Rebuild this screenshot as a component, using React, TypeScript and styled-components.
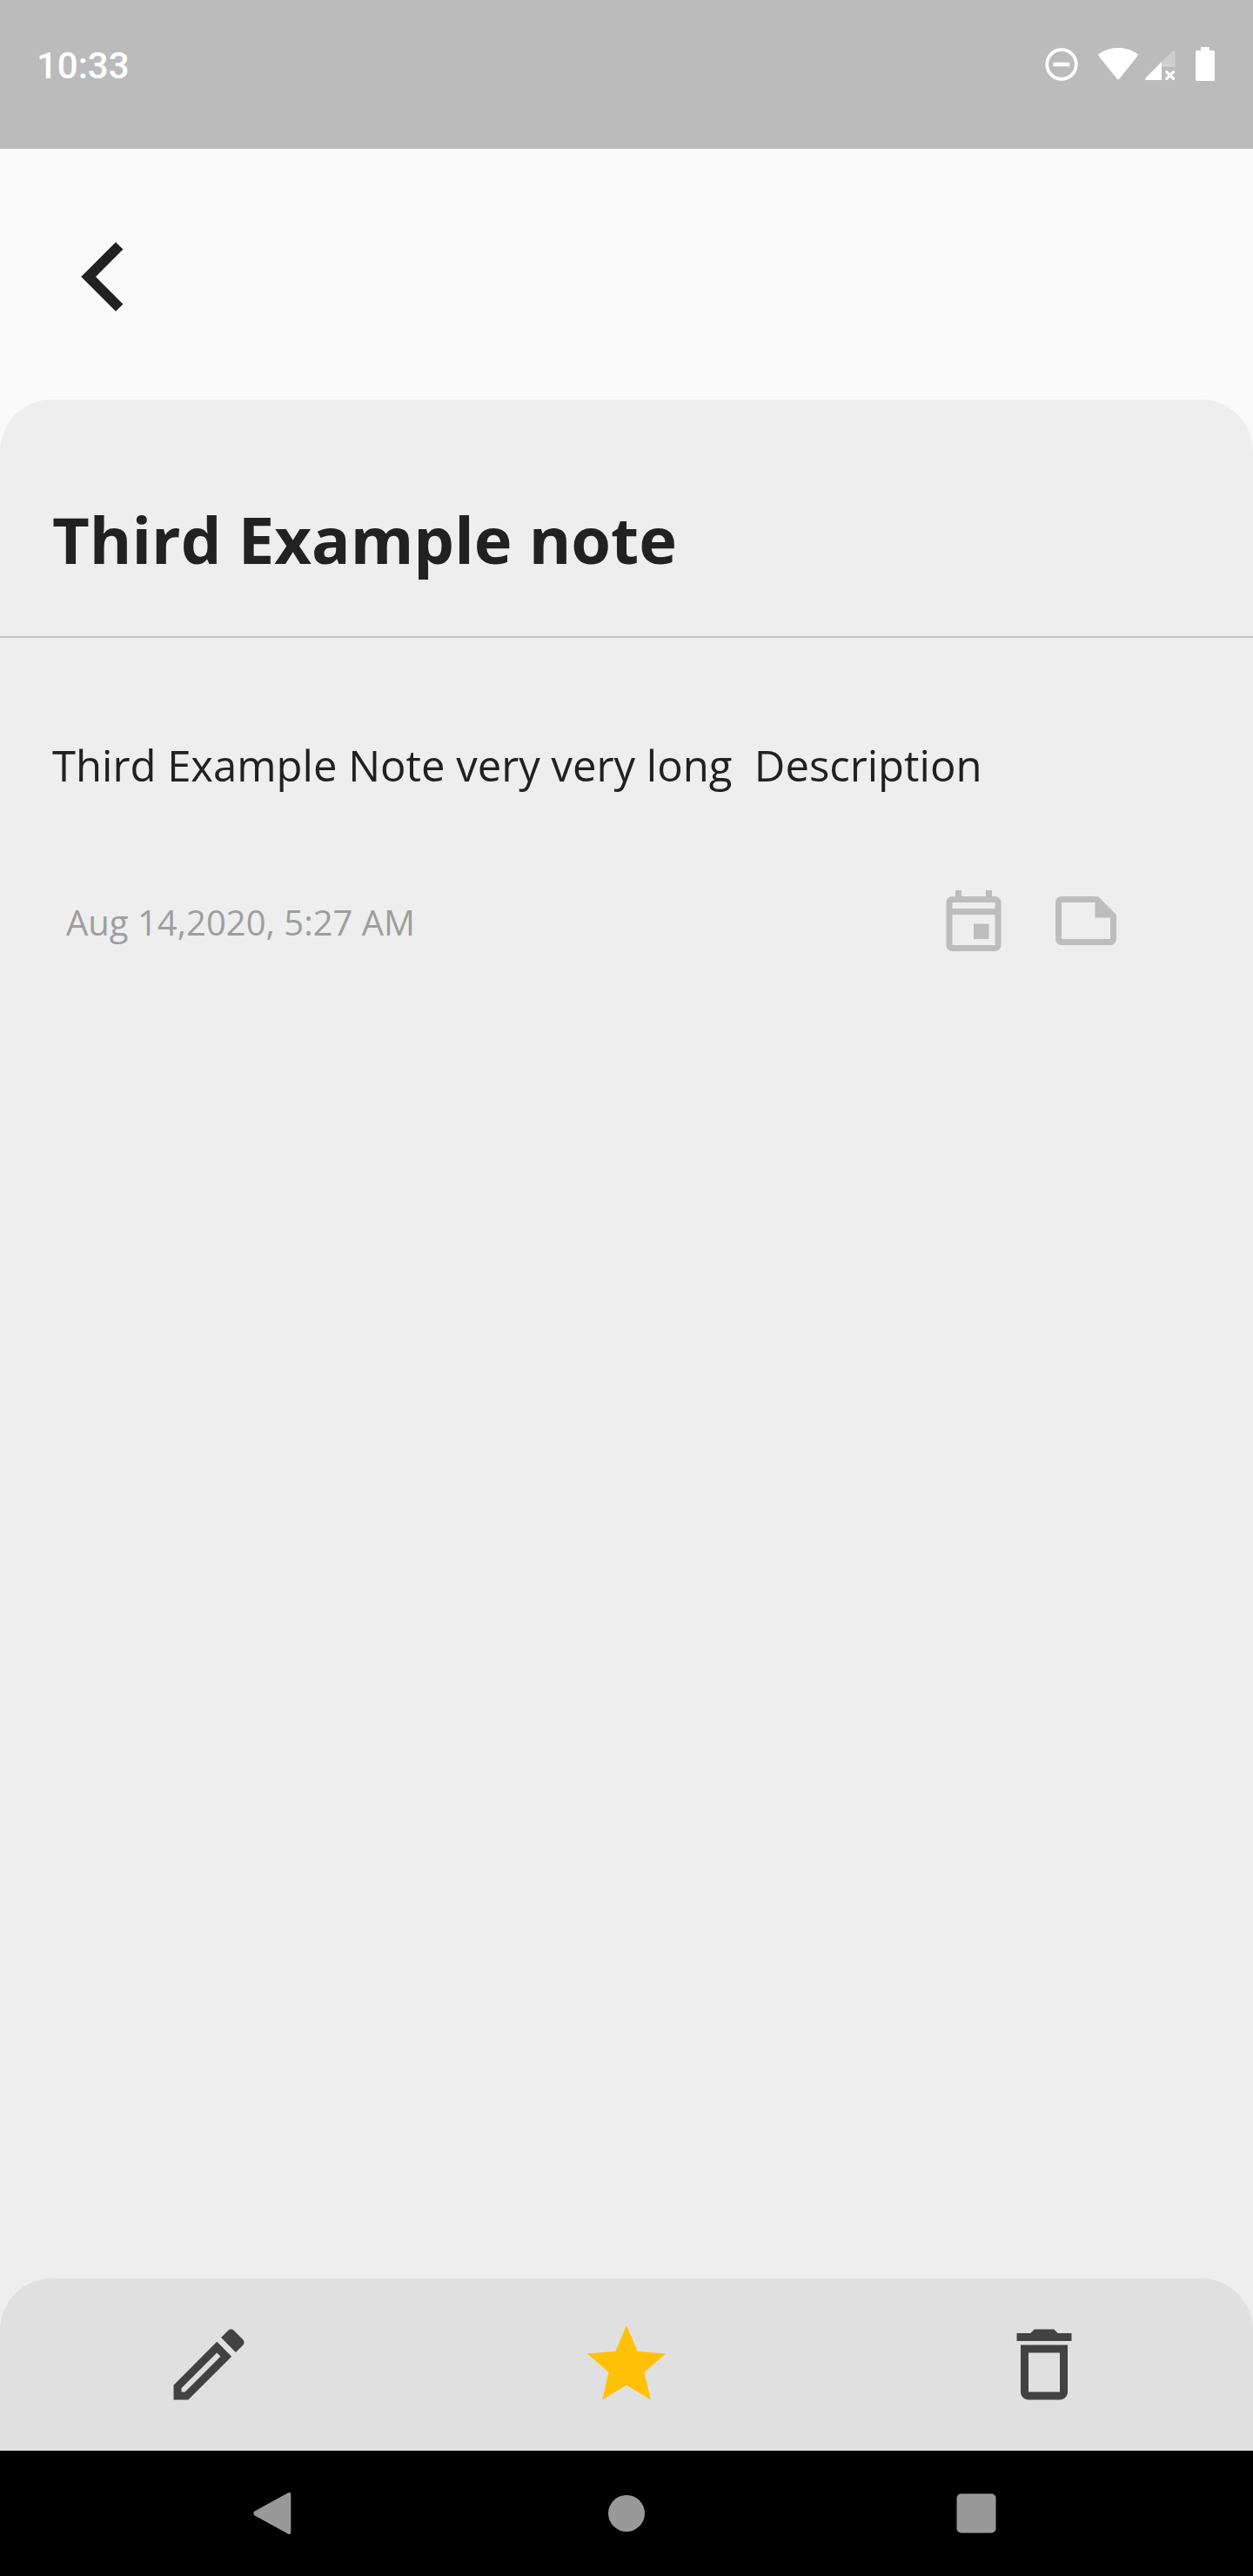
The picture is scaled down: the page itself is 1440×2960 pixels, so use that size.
import React from "react";
import styled, { createGlobalStyle } from "styled-components";

const GlobalStyle = createGlobalStyle`
  *, *::before, *::after { box-sizing: border-box; }
  body {
    margin: 0;
    background: #eeeeee;
    color: #212121;
    font-family: "Open Sans", "Noto Sans", sans-serif;
  }
`;

const Screen = styled.div`
  display: flex;
  flex-direction: column;
  min-height: 100vh;
  background: #fafafa;
`;

const StatusBar = styled.div`
  display: flex;
  justify-content: space-between;
  align-items: flex-start;
  height: 171px;
  padding: 51px 44px 0 42px;
  background: #bbbbbb;
  color: #ffffff;
`;

const Clock = styled.time`
  font: 500 42px/50px Roboto, sans-serif;
`;

const StatusIcons = styled.div`
  display: flex;
  align-items: center;
  padding-top: 3px;
`;

const StatusIcon = styled.svg<{ $gap?: number }>`
  display: block;
  margin-left: ${(p) => p.$gap ?? 0}px;
`;

const AppBar = styled.header`
  display: flex;
  align-items: center;
  height: 288px;
  padding: 0 56px;
`;

const IconButton = styled.button<{ $color: string }>`
  display: flex;
  align-items: center;
  justify-content: center;
  padding: 0;
  border: 0;
  background: none;
  color: ${(p) => p.$color};
  cursor: pointer;
`;

const Glyph = styled.svg<{ $size: number }>`
  display: block;
  width: ${(p) => p.$size}px;
  height: ${(p) => p.$size}px;
  fill: currentColor;
`;

const Note = styled.main`
  flex: 1;
  border-radius: 60px 60px 0 0;
  background: #eeeeee;
`;

const TitleBlock = styled.div`
  padding: 109px 60px 59px;
  border-bottom: 2px solid #c6c6c6;
`;

const Title = styled.h1`
  margin: 0;
  font-size: 74px;
  line-height: 104px;
  font-weight: 700;
`;

const Body = styled.div`
  padding: 110px 60px;
`;

const Description = styled.p`
  margin: 0;
  font-size: 49px;
  line-height: 72px;
  white-space: pre-wrap;
`;

const Meta = styled.div`
  display: flex;
  align-items: center;
  justify-content: space-between;
  margin-top: 101px;
  padding: 0 90px 0 16px;
`;

const Stamp = styled.time`
  padding-top: 4px;
  color: #9e9e9e;
  font-size: 40px;
  line-height: 56px;
`;

const MetaActions = styled.div`
  display: flex;
  gap: 45px;
`;

const ActionTray = styled.footer`
  background: #eeeeee;
`;

const ActionBar = styled.div`
  display: grid;
  grid-template-columns: repeat(3, 1fr);
  height: 198px;
  border-radius: 60px 60px 0 0;
  background: #e0e0e0;
`;

const NavBar = styled.nav`
  display: flex;
  justify-content: center;
  gap: 306px;
  height: 144px;
  background: #000000;
`;

export default function App() {
  return (
    <>
      <GlobalStyle />
      <Screen>
        <StatusBar>
          <Clock>10:33</Clock>
          <StatusIcons>
            <StatusIcon width="38" height="38" viewBox="0 0 38 38" aria-hidden="true">
              <circle cx="19" cy="19" r="16.8" fill="none" stroke="#fff" strokeWidth="3.8" />
              <path d="M9.3 16.7h19v4.6h-19z" fill="#fff" />
            </StatusIcon>
            <StatusIcon $gap={23} width="46" height="38" viewBox="0 0 46 38" aria-hidden="true">
              <path d="M23 0C14.5 0 7 2.6 1 6.8C0 7.5 0 8.8.7 9.6L21.6 35.4C22.4 36.4 23.6 36.4 24.4 35.4L45.3 9.6C46 8.8 46 7.5 45 6.8C39 2.6 31.5 0 23 0Z" fill="#fff" />
            </StatusIcon>
            <StatusIcon $gap={8} width="35" height="38" viewBox="0 0 35 38" aria-hidden="true">
              <path d="M19 16.2L31.5 3.6Q34.5 1.8 34.5 5V22H19Z" fill="#fff" opacity=".3" />
              <path d="M19 16V37H1.8Q-.6 37 .6 34.6Z" fill="#fff" />
              <path d="M24.8 27.6L32.6 35.4M32.6 27.6L24.8 35.4" stroke="#fff" strokeWidth="3.2" strokeLinecap="round" />
            </StatusIcon>
            <StatusIcon $gap={23} width="22" height="39" viewBox="0 0 22 39" aria-hidden="true">
              <path d="M6 0H16V4H20.5Q22 4 22 5.5V37.5Q22 39 20.5 39H1.5Q0 39 0 37.5V5.5Q0 4 1.5 4H6Z" fill="#fff" />
            </StatusIcon>
          </StatusIcons>
        </StatusBar>

        <AppBar>
          <IconButton $color="#212121" aria-label="Back">
            <Glyph $size={120} viewBox="0 0 120 120">
              <path d="M37.3 63L77 23.3L85.4 31.6L54 63L85.4 94.4L77 102.7Z" />
            </Glyph>
          </IconButton>
        </AppBar>

        <Note>
          <TitleBlock>
            <Title>Third Example note</Title>
          </TitleBlock>
          <Body>
            <Description>{"Third Example Note very very long  Description"}</Description>
            <Meta>
              <Stamp dateTime="2020-08-14T05:27">Aug 14,2020, 5:27 AM</Stamp>
              <MetaActions>
                <IconButton $color="#bdbdbd" aria-label="Date">
                  <Glyph $size={84} viewBox="0 0 24 24">
                    <path
                      fillRule="evenodd"
                      d="M19 4h-1V2h-2v2H8V2H6v2H5c-1.1 0-2 .9-2 2v14c0 1.1.9 2 2 2h14c1.1 0 2-.9 2-2V6c0-1.1-.9-2-2-2zM5 6h14v2H5zM5 10h14v10H5zM12 13h5v5h-5z"
                    />
                  </Glyph>
                </IconButton>
                <IconButton $color="#bdbdbd" aria-label="Label">
                  <Glyph $size={84} viewBox="0 0 24 24">
                    <path fillRule="evenodd" d="M16 4H4c-1.1 0-2 .9-2 2v12c0 1.1.9 2 2 2h16c1.1 0 2-.9 2-2v-8l-6-6zM4 18V6h11v5h5v7z" />
                  </Glyph>
                </IconButton>
              </MetaActions>
            </Meta>
          </Body>
        </Note>

        <ActionTray>
          <ActionBar>
            <IconButton $color="#424242" aria-label="Edit">
              <Glyph $size={108} viewBox="0 0 24 24">
                <path d="M14.06 9.02l.92.92L5.92 19H5v-.92l9.06-9.06M17.66 3c-.25 0-.51.1-.7.29l-1.83 1.83 3.75 3.75 1.83-1.83c.39-.39.39-1.02 0-1.41l-2.34-2.34c-.2-.2-.45-.29-.71-.29zm-3.6 3.19L3 17.25V21h3.75L17.81 9.94l-3.75-3.75z" />
              </Glyph>
            </IconButton>
            <IconButton $color="#ffc107" aria-label="Favourite">
              <Glyph $size={108} viewBox="0 0 24 24">
                <path d="M12 17.27L18.18 21l-1.64-7.03L22 9.24l-7.19-.61L12 2 9.19 8.63 2 9.24l5.46 4.73L5.82 21z" />
              </Glyph>
            </IconButton>
            <IconButton $color="#424242" aria-label="Delete">
              <Glyph $size={108} viewBox="0 0 24 24">
                <path fillRule="evenodd" d="M6 19c0 1.1.9 2 2 2h8c1.1 0 2-.9 2-2V7H6v12zM8 9h8v10H8V9zm7.5-5l-1-1h-5l-1 1H5v2h14V4z" />
              </Glyph>
            </IconButton>
          </ActionBar>
        </ActionTray>

        <NavBar>
          <IconButton $color="#999999" aria-label="System back">
            <Glyph $size={96} viewBox="0 0 96 96">
              <path d="M22.7 45.5L60.5 24.8Q64 22.6 64.3 26V70Q64 73.4 60.5 71.2L22.7 50.5Q20 48 22.7 45.5Z" />
            </Glyph>
          </IconButton>
          <IconButton $color="#999999" aria-label="Home">
            <Glyph $size={96} viewBox="0 0 96 96">
              <circle cx="48" cy="48" r="21" />
            </Glyph>
          </IconButton>
          <IconButton $color="#999999" aria-label="Recent apps">
            <Glyph $size={96} viewBox="0 0 96 96">
              <rect x="25.5" y="25.5" width="45" height="45" rx="5" />
            </Glyph>
          </IconButton>
        </NavBar>
      </Screen>
    </>
  );
}
